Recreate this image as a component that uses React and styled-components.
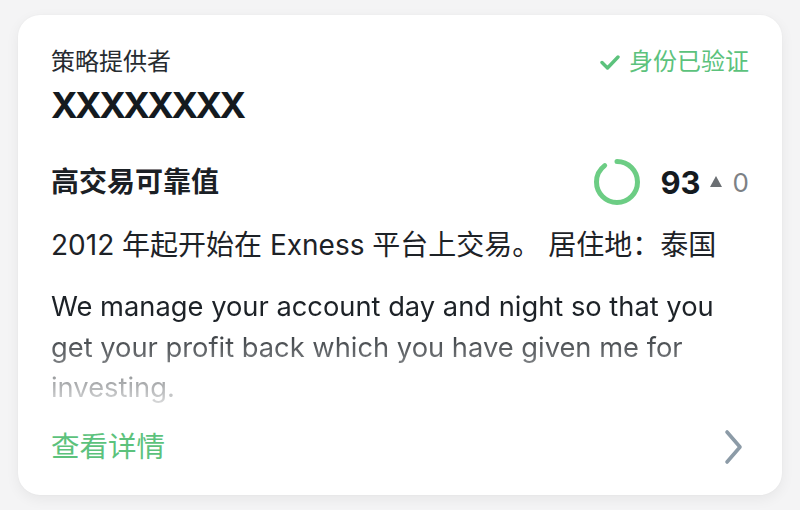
import React from 'react'
import styled, { createGlobalStyle } from 'styled-components'

const GlobalStyle = createGlobalStyle`
  html, body {
    margin: 0;
    padding: 0;
    background: #f4f4f5;
  }
  body {
    font-family: "Inter", "Noto Sans CJK SC", sans-serif;
  }
`

const Page = styled.div`
  width: 800px;
  height: 510px;
  box-sizing: border-box;
  padding: 15px 18px;
`

const Card = styled.div`
  background: #fff;
  border-radius: 22px;
  box-shadow: 0 4px 14px rgba(0, 0, 0, 0.06), 0 0 2px rgba(0, 0, 0, 0.04);
  height: 480px;
  box-sizing: border-box;
  padding: 31px 33px 0 33px;
  display: flex;
  flex-direction: column;
  color: #1b2025;
`

const Row = styled.div`
  display: flex;
  justify-content: space-between;
  align-items: ${({ align }) => align || 'center'};
  margin-top: ${({ gap }) => gap || 0}px;
`

const Label = styled.div`
  font-size: 24px;
  line-height: 32px;
  color: #262b30;
`

const Verified = styled.div`
  display: flex;
  align-items: center;
  gap: 9px;
  font-size: 24px;
  line-height: 32px;
  color: #5cc27c;
`

const Name = styled.div`
  font-weight: 700;
  font-size: 36px;
  line-height: 44px;
  letter-spacing: -2.5px;
  margin-top: 5px;
  color: #141a1f;
`

const Heading = styled.div`
  font-weight: 700;
  font-size: 28px;
  line-height: 36px;
`

const Score = styled.div`
  display: flex;
  align-items: center;
`

const ScoreValue = styled.span`
  font-weight: 700;
  font-size: 31px;
  margin-left: 19px;
  color: #141a1f;
`

const Delta = styled.span`
  font-size: 26px;
  color: #7d8185;
  margin-left: 9px;
  display: flex;
  align-items: center;
  gap: 11px;

  &::before {
    content: '';
    border-left: 6px solid transparent;
    border-right: 6px solid transparent;
    border-bottom: 11px solid #6b6f73;
    margin-top: -2px;
  }
`

const Since = styled.div`
  font-size: 28px;
  line-height: 36px;
  margin-top: 21px;
  color: #1d2227;
`

const Description = styled.div`
  font-size: 27.3px;
  line-height: 40.5px;
  margin-top: 24px;
  height: 116px;
  overflow: hidden;
  color: #1d2227;
  -webkit-mask-image: linear-gradient(to bottom, #000 30%, rgba(0, 0, 0, 0.18) 100%);
  mask-image: linear-gradient(to bottom, #000 30%, rgba(0, 0, 0, 0.18) 100%);
`

const Footer = styled.div`
  display: flex;
  justify-content: space-between;
  align-items: center;
  margin-top: 26px;
  padding-right: 4px;
`

const DetailsLink = styled.a`
  font-size: 28.5px;
  line-height: 36px;
  color: #5cc27c;
  text-decoration: none;
`

const Check = () => (
  <svg width="20" height="17" viewBox="0 0 20 17">
    <path d="M2 8.5 L7.5 14 L18 3" fill="none" stroke="#5cc27c" strokeWidth="3.4" strokeLinecap="round" strokeLinejoin="round" />
  </svg>
)

const Ring = ({ value }) => {
  const r = 20.5
  const c = 2 * Math.PI * r
  return (
    <svg width="48" height="48" viewBox="0 0 48 48">
      <circle
        cx="24"
        cy="24"
        r={r}
        fill="none"
        stroke="#6ccd84"
        strokeWidth="5"
        strokeLinecap="round"
        strokeDasharray={`${(c * value) / 100 - 5} ${c}`}
        transform="rotate(-90 24 24)"
      />
    </svg>
  )
}

const Chevron = () => (
  <svg width="22" height="36" viewBox="0 0 22 36">
    <path d="M4 3 L17 18 L4 33" fill="none" stroke="#8c9ba7" strokeWidth="3.6" strokeLinecap="round" strokeLinejoin="round" />
  </svg>
)

export default function App() {
  return (
    <>
      <GlobalStyle />
      <Page>
        <Card>
          <Row align="flex-start">
            <Label>策略提供者</Label>
            <Verified>
              <Check />
              身份已验证
            </Verified>
          </Row>
          <Name>XXXXXXXX</Name>
          <Row gap={31}>
            <Heading>高交易可靠值</Heading>
            <Score>
              <Ring value={93} />
              <ScoreValue>93</ScoreValue>
              <Delta>0</Delta>
            </Score>
          </Row>
          <Since>2012 年起开始在 Exness 平台上交易。 居住地：泰国</Since>
          <Description>
            We manage your account day and night so that you get your profit back which you have given me for investing.
          </Description>
          <Footer>
            <DetailsLink>查看详情</DetailsLink>
            <Chevron />
          </Footer>
        </Card>
      </Page>
    </>
  )
}
